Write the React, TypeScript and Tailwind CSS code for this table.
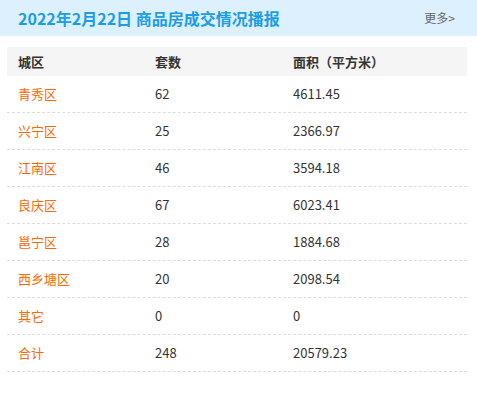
import React from "react";

const rows = [
  ["青秀区", "62", "4611.45"],
  ["兴宁区", "25", "2366.97"],
  ["江南区", "46", "3594.18"],
  ["良庆区", "67", "6023.41"],
  ["邕宁区", "28", "1884.68"],
  ["西乡塘区", "20", "2098.54"],
  ["其它", "0", "0"],
  ["合计", "248", "20579.23"],
];

export default function App() {
  return (
    <div
      className="w-[477px] h-[395px] bg-white"
      style={{ fontFamily: '"Noto Sans CJK SC", "Noto Sans", sans-serif' }}
    >
      <div className="h-[36px] bg-[#ddf0fd] flex items-center justify-between pl-[18px] pr-[22px]">
        <span className="text-[16px] font-bold text-[#1b9de8] leading-none">
          2022年2月22日 商品房成交情况播报
        </span>
        <span className="text-[12px] text-[#666] leading-none">更多&gt;</span>
      </div>
      <div className="mt-[11px] mx-[7px] w-[460px]">
        <div className="h-[29px] bg-[#f5f5f5] flex items-center text-[13px] font-bold text-[#333]">
          <div className="w-[148px] pl-[11px]">城区</div>
          <div className="w-[138px]">套数</div>
          <div className="flex-1">面积（平方米）</div>
        </div>
        {rows.map((r) => (
          <div
            key={r[0]}
            className="h-[37px] border-b border-dashed border-[#dcdcdc] flex items-center text-[13px]"
          >
            <div className="w-[148px] pl-[11px] text-[#ff6a00]">{r[0]}</div>
            <div className="w-[138px] text-[#333]">{r[1]}</div>
            <div className="flex-1 text-[#333]">{r[2]}</div>
          </div>
        ))}
      </div>
    </div>
  );
}
